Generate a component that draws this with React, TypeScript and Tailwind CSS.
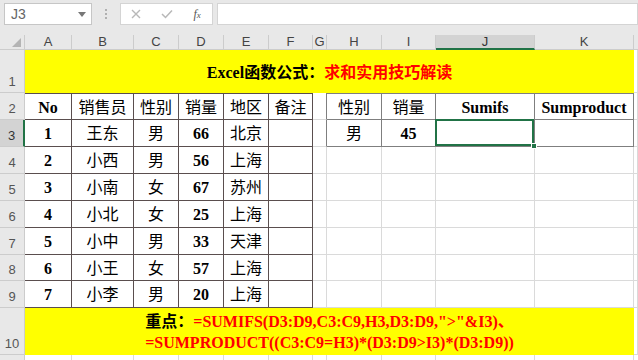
import React from "react";

const serif = { fontFamily: '"Liberation Serif", "Noto Sans CJK SC", serif' };
const sans = { fontFamily: '"Liberation Sans", Arial, sans-serif' };

const GRIDCELL = "bg-white border-r border-b border-[#dadada]";
const LT = "bg-white border-r border-b border-[#5a4e4e] flex items-center justify-center pt-[2px]";
const RT = "bg-white border-r border-b border-[#7f7f7f] flex items-center justify-center pt-[2px]";
const RH = "bg-[#e8e8e8] border-r border-b border-[#cccccc] flex items-end justify-center pb-[1px] text-[13px] text-[#555]";
const RHSEL = "bg-[#d3d3d3] border-r-2 border-r-[#217346] border-b border-b-[#cccccc] flex items-end justify-center pb-[1px] text-[13px] text-[#333]";

const data: [string, string, string, string, string][] = [
  ["1", "王东", "男", "66", "北京"],
  ["2", "小西", "男", "56", "上海"],
  ["3", "小南", "女", "67", "苏州"],
  ["4", "小北", "女", "25", "上海"],
  ["5", "小中", "男", "33", "天津"],
  ["6", "小王", "女", "57", "上海"],
  ["7", "小李", "男", "20", "上海"],
];

function RowHead({ n, sel }: { n: string; sel?: boolean }) {
  return (
    <div className={sel ? RHSEL : RH} style={sans}>
      {n}
    </div>
  );
}

export default function App() {
  const cols = ["A", "B", "C", "D", "E", "F", "G", "H", "I", "J", "K"];
  return (
    <div className="w-[638px] h-[360px] overflow-hidden bg-[#e8e8e8] relative" style={sans}>
      {/* toolbar */}
      <div className="h-[35px] flex items-start pt-[3px] pl-[4px] gap-0">
        <div className="w-[88px] h-[22px] bg-white border border-[#c6c6c6] flex items-center justify-between pl-[6px] pr-[5px]">
          <span className="text-[14px] text-[#666]">J3</span>
          <svg width="8" height="5" viewBox="0 0 8 5">
            <path d="M0 0 L8 0 L4 5 Z" fill="#777" />
          </svg>
        </div>
        <div className="w-[28px] h-[22px] flex flex-col items-center justify-center gap-[2px]">
          <div className="w-[2px] h-[2px] bg-[#b0b0b0]" />
          <div className="w-[2px] h-[2px] bg-[#b0b0b0]" />
          <div className="w-[2px] h-[2px] bg-[#b0b0b0]" />
        </div>
        <div className="w-[93px] h-[22px] bg-white border border-[#d4d4d4] flex items-center">
          <div className="w-[30px] flex justify-center">
            <svg width="10" height="10" viewBox="0 0 10 10">
              <path d="M1 1 L9 9 M9 1 L1 9" stroke="#b8b8b8" strokeWidth="1.4" />
            </svg>
          </div>
          <div className="w-[32px] flex justify-center">
            <svg width="12" height="10" viewBox="0 0 12 10">
              <path d="M1 5 L4.5 8.5 L11 1.5" stroke="#b8b8b8" strokeWidth="1.5" fill="none" />
            </svg>
          </div>
          <div className="w-[30px] flex justify-center">
            <span className="text-[12px] italic text-[#555]" style={serif}>
              f<span className="text-[9px]">x</span>
            </span>
          </div>
        </div>
        <div className="ml-[4px] flex-1 h-[22px] bg-white border border-[#d4d4d4]" />
      </div>

      {/* grid */}
      <div className="grid grid-cols-[25px_47px_62px_45px_45px_45px_44px_14px_55px_54px_99px_99px_4px] grid-rows-[15px_43px_27px_27px_27px_27px_27px_27px_26px_27px_47px_5px]">
        {/* column headers */}
        <div className="bg-[#e8e8e8] border-r border-b border-[#cccccc] flex items-end justify-end pr-[3px] pb-[2px]">
          <svg width="9" height="9" viewBox="0 0 9 9">
            <path d="M9 0 L9 9 L0 9 Z" fill="#b4b4b4" />
          </svg>
        </div>
        {cols.map((c) =>
          c === "J" ? (
            <div
              key={c}
              className="bg-[#d3d3d3] border-r border-r-[#cccccc] border-b-2 border-b-[#217346] flex items-center justify-center text-[13px] text-[#333]"
            >
              {c}
            </div>
          ) : (
            <div
              key={c}
              className="bg-[#e8e8e8] border-r border-b border-[#cccccc] flex items-center justify-center text-[13px] text-[#444]"
            >
              {c}
            </div>
          )
        )}
        <div className="bg-[#e8e8e8] border-b border-[#cccccc]" />

        {/* row 1 */}
        <RowHead n="1" />
        <div
          className="col-span-11 bg-[#ffff00] flex items-center justify-center pt-[3px] text-[16px] font-bold"
          style={serif}
        >
          <span className="text-black">Excel函数公式：</span>
          <span className="text-[#ff0000]">求和实用技巧解读</span>
        </div>
        <div className={GRIDCELL} />

        {/* row 2 */}
        <RowHead n="2" />
        <div className={LT + " border-t text-[16px] font-bold"} style={serif}>No</div>
        <div className={LT + " border-t text-[16px]"} style={serif}>销售员</div>
        <div className={LT + " border-t text-[16px]"} style={serif}>性别</div>
        <div className={LT + " border-t text-[16px]"} style={serif}>销量</div>
        <div className={LT + " border-t text-[16px]"} style={serif}>地区</div>
        <div className={LT + " border-t text-[16px]"} style={serif}>备注</div>
        <div className="bg-white border-r border-r-[#7f7f7f] border-b border-b-[#dadada]" />
        <div className={RT + " border-t text-[16px]"} style={serif}>性别</div>
        <div className={RT + " border-t text-[16px]"} style={serif}>销量</div>
        <div className={RT + " border-t text-[16px] font-bold"} style={serif}>Sumifs</div>
        <div className={RT + " border-t text-[16px] font-bold"} style={serif}>Sumproduct</div>
        <div className={GRIDCELL} />

        {/* rows 3-9 */}
        {data.map((r, i) => (
          <React.Fragment key={i}>
            <RowHead n={String(i + 3)} sel={i === 0} />
            <div className={LT + " text-[16px] font-bold"} style={serif}>{r[0]}</div>
            <div className={LT + " text-[16px]"} style={serif}>{r[1]}</div>
            <div className={LT + " text-[16px]"} style={serif}>{r[2]}</div>
            <div className={LT + " text-[16px] font-bold"} style={serif}>{r[3]}</div>
            <div className={LT + " text-[16px]"} style={serif}>{r[4]}</div>
            <div className={LT} />
            {i === 0 ? (
              <>
                <div className="bg-white border-r border-r-[#7f7f7f] border-b border-b-[#dadada]" />
                <div className={RT + " text-[16px]"} style={serif}>男</div>
                <div className={RT + " text-[16px] font-bold"} style={serif}>45</div>
                <div className={RT + " relative"}>
                  <div className="absolute -left-px -top-px right-0 bottom-0 border-2 border-[#217346]" />
                  <div className="absolute -right-[3px] -bottom-[3px] w-[6px] h-[6px] bg-[#217346] border border-white" />
                </div>
                <div className={RT} />
              </>
            ) : (
              <>
                <div className={GRIDCELL} />
                <div className={GRIDCELL} />
                <div className={GRIDCELL} />
                <div className={GRIDCELL} />
                <div className={GRIDCELL} />
              </>
            )}
            <div className={GRIDCELL} />
          </React.Fragment>
        ))}

        {/* row 10 */}
        <RowHead n="10" />
        <div
          className="col-span-11 bg-[#ffff00] flex flex-col items-center justify-center text-[16px] font-bold leading-[21px] pt-[1px] text-[#ff0000]"
          style={serif}
        >
          <div className="whitespace-nowrap">
            <span className="text-black">重点：</span>
            {'=SUMIFS(D3:D9,C3:C9,H3,D3:D9,">"&I3)、'}
          </div>
          <div className="whitespace-nowrap">=SUMPRODUCT((C3:C9=H3)*(D3:D9&gt;I3)*(D3:D9))</div>
        </div>
        <div className={GRIDCELL} />

        {/* row 11 */}
        <div className="bg-[#e8e8e8] border-r border-[#cccccc] overflow-hidden text-[13px] text-[#555] flex justify-center items-start">
          11
        </div>
        {cols.map((c) => (
          <div key={c} className="bg-white border-r border-[#dadada]" />
        ))}
        <div className="bg-white" />
      </div>
    </div>
  );
}
